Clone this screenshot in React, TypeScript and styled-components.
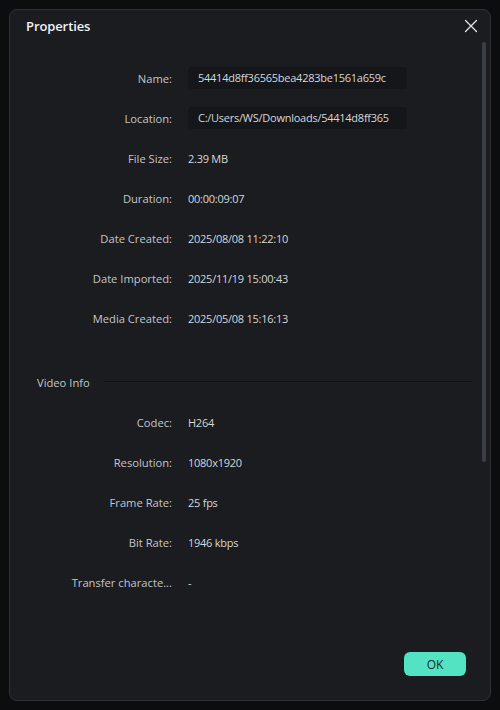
import React from 'react'
import styled, { createGlobalStyle } from 'styled-components'

const GlobalStyle = createGlobalStyle`
  html, body {
    margin: 0;
    padding: 0;
    background: #0c0d0f;
  }
  body {
    font-family: 'Open Sans', 'Noto Sans', sans-serif;
    -webkit-font-smoothing: antialiased;
  }
`

type Row = { label: string; value: string; boxed?: boolean }

const general: Row[] = [
  { label: 'Name:', value: '54414d8ff36565bea4283be1561a659c', boxed: true },
  { label: 'Location:', value: 'C:/Users/WS/Downloads/54414d8ff365', boxed: true },
  { label: 'File Size:', value: '2.39 MB' },
  { label: 'Duration:', value: '00:00:09:07' },
  { label: 'Date Created:', value: '2025/08/08 11:22:10' },
  { label: 'Date Imported:', value: '2025/11/19 15:00:43' },
  { label: 'Media Created:', value: '2025/05/08 15:16:13' },
]

const video: Row[] = [
  { label: 'Codec:', value: 'H264' },
  { label: 'Resolution:', value: '1080x1920' },
  { label: 'Frame Rate:', value: '25 fps' },
  { label: 'Bit Rate:', value: '1946 kbps' },
  { label: 'Transfer characte...', value: '-' },
]

const CloseIcon = () => (
  <svg width="14" height="14" viewBox="0 0 14 14" fill="none">
    <path d="M1.5 1.5L12.5 12.5M12.5 1.5L1.5 12.5" stroke="#e4e5e7" strokeWidth="1.3" strokeLinecap="round" />
  </svg>
)

export default function App() {
  const renderRow = (row: Row) => (
    <PropRow key={row.label}>
      <Label>{row.label}</Label>
      {row.boxed ? <ValueBox>{row.value}</ValueBox> : <Value>{row.value}</Value>}
    </PropRow>
  )

  return (
    <>
      <GlobalStyle />
      <Page>
        <Dialog>
          <Header>
            <Title>Properties</Title>
            <CloseButton aria-label="Close">
              <CloseIcon />
            </CloseButton>
          </Header>
          <Body>
            {general.map(renderRow)}
            <SectionHeader>
              <SectionTitle>Video Info</SectionTitle>
              <SectionLine />
            </SectionHeader>
            {video.map(renderRow)}
          </Body>
          <Footer>
            <OkButton>OK</OkButton>
          </Footer>
          <ScrollThumb />
        </Dialog>
      </Page>
    </>
  )
}

const Page = styled.div`
  width: 500px;
  height: 710px;
  padding: 9px;
  box-sizing: border-box;
`

const Dialog = styled.div`
  position: relative;
  height: 692px;
  box-sizing: border-box;
  background: #1a1c20;
  border: 1px solid #2e3137;
  border-radius: 8px;
  display: flex;
  flex-direction: column;
  overflow: hidden;
`

const Header = styled.div`
  height: 32px;
  display: flex;
  align-items: center;
  justify-content: space-between;
  padding: 0 12px 0 16px;
  flex-shrink: 0;
`

const Title = styled.div`
  color: #f1f2f3;
  font-size: 13px;
  font-weight: 600;
  letter-spacing: -0.1px;
`

const CloseButton = styled.button`
  background: none;
  border: none;
  padding: 0;
  width: 14px;
  height: 14px;
  display: flex;
  cursor: pointer;
`

const Body = styled.div`
  flex: 1;
  padding-top: 16px;
  display: flex;
  flex-direction: column;
`

const PropRow = styled.div`
  height: 40px;
  display: grid;
  grid-template-columns: 162px 1fr;
  column-gap: 16px;
  align-items: center;
`

const Label = styled.div`
  text-align: right;
  color: #c4c6ca;
  font-size: 11.2px;
  white-space: nowrap;
`

const Value = styled.div`
  color: #d6d7da;
  font-size: 11px;
  letter-spacing: -0.25px;
  white-space: nowrap;
`

const ValueBox = styled.div`
  width: 219px;
  height: 22px;
  box-sizing: border-box;
  padding: 0 0 0 10px;
  background: #141619;
  border-radius: 4px;
  color: #d6d7da;
  font-size: 11px;
  letter-spacing: -0.25px;
  line-height: 22px;
  white-space: nowrap;
  overflow: hidden;
`

const SectionHeader = styled.div`
  height: 40px;
  margin-top: 24px;
  padding: 0 17px 0 27px;
  display: flex;
  align-items: center;
  gap: 14px;
`

const SectionTitle = styled.div`
  color: #c4c6ca;
  font-size: 11.2px;
  white-space: nowrap;
`

const SectionLine = styled.div`
  flex: 1;
  height: 1px;
  margin-top: -1px;
  background: #101114;
`

const Footer = styled.div`
  display: flex;
  justify-content: flex-end;
  padding: 0 24px 24px 0;
`

const OkButton = styled.button`
  width: 62px;
  height: 24px;
  border: none;
  border-radius: 6px;
  background: #53e3c3;
  color: #1c2a27;
  font-family: 'Open Sans', 'Noto Sans', sans-serif;
  font-size: 12px;
  padding: 0;
  cursor: pointer;
`

const ScrollThumb = styled.div`
  position: absolute;
  top: 32px;
  right: 4px;
  width: 4px;
  height: 420px;
  border-radius: 2px;
  background: #3a3e45;
`
